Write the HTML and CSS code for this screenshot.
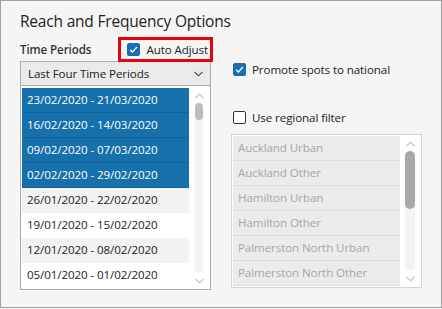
FILE: index.html
```html
<!DOCTYPE html>
<html lang="en">
<head>
    <meta charset="UTF-8">
    <title>Reach and Frequency Options</title>
    <link rel="stylesheet" href="styles.css">
</head>
<body>
    <div class="window">
        <h1 class="title">Reach and Frequency Options</h1>

        <div class="columns">
            <div class="col">
                <div class="head">
                    <span class="label">Time Periods</span>
                    <label class="auto">
                        <span class="check on"><svg viewBox="0 0 13 13"><path d="M2.5 6.8 5.2 9.4 10.6 3.6" fill="none" stroke="#fff" stroke-width="1.6"/></svg></span>
                        <span>Auto Adjust</span>
                    </label>
                </div>

                <div class="combo">
                    <span>Last Four Time Periods</span>
                    <svg class="chev" viewBox="0 0 9 6"><path d="M0.5 0.8 4.5 4.8 8.5 0.8" fill="none" stroke="#444" stroke-width="1.1"/></svg>
                </div>

                <div class="list">
                    <div class="rows">
                        <div class="row sel">23/02/2020 - 21/03/2020</div>
                        <div class="row sel">16/02/2020 - 14/03/2020</div>
                        <div class="row sel">09/02/2020 - 07/03/2020</div>
                        <div class="row sel">02/02/2020 - 29/02/2020</div>
                        <div class="row">26/01/2020 - 22/02/2020</div>
                        <div class="row">19/01/2020 - 15/02/2020</div>
                        <div class="row">12/01/2020 - 08/02/2020</div>
                        <div class="row">05/01/2020 - 01/02/2020</div>
                    </div>
                    <div class="scroll">
                        <svg class="arrow" viewBox="0 0 9 6"><path d="M0.5 5.2 4.5 1.2 8.5 5.2" fill="none" stroke="#bbb" stroke-width="1.1"/></svg>
                        <div class="track"><div class="thumb"></div></div>
                        <svg class="arrow" viewBox="0 0 9 6"><path d="M0.5 0.8 4.5 4.8 8.5 0.8" fill="none" stroke="#bbb" stroke-width="1.1"/></svg>
                    </div>
                </div>
            </div>

            <div class="col right">
                <label class="option promote">
                    <span class="check on"><svg viewBox="0 0 13 13"><path d="M2.5 6.8 5.2 9.4 10.6 3.6" fill="none" stroke="#fff" stroke-width="1.6"/></svg></span>
                    <span>Promote spots to national</span>
                </label>
                <label class="option regional">
                    <span class="check"></span>
                    <span>Use regional filter</span>
                </label>

                <div class="list regions">
                    <div class="rows">
                        <div class="row">Auckland Urban</div>
                        <div class="row">Auckland Other</div>
                        <div class="row">Hamilton Urban</div>
                        <div class="row">Hamilton Other</div>
                        <div class="row">Palmerston North Urban</div>
                        <div class="row">Palmerston North Other</div>
                    </div>
                    <div class="scroll">
                        <svg class="arrow" viewBox="0 0 9 6"><path d="M0.5 5.2 4.5 1.2 8.5 5.2" fill="none" stroke="#bbb" stroke-width="1.1"/></svg>
                        <div class="track"><div class="thumb"></div></div>
                        <svg class="arrow" viewBox="0 0 9 6"><path d="M0.5 0.8 4.5 4.8 8.5 0.8" fill="none" stroke="#bbb" stroke-width="1.1"/></svg>
                    </div>
                </div>
            </div>
        </div>
    </div>
</body>
</html>
```

FILE: styles.css
```css
body {
    margin: 0;
    background: #fff;
    font-family: "Open Sans", "Noto Sans", sans-serif;
    font-size: 11.6px;
    letter-spacing: -0.1px;
    color: #222;
}
.window {
    width: 442px;
    height: 308px;
    box-sizing: border-box;
    border: 1px solid #a0a0a0;
    background: #f5f5f5;
    padding: 0 19px;
}
.title {
    margin: 0;
    padding-top: 9px;
    font-size: 15.5px;
    font-weight: normal;
    letter-spacing: -0.2px;
    line-height: 22px;
    color: #222;
}
.columns {
    display: flex;
    gap: 20px;
    margin-top: 5px;
}
.col {
    width: 192px;
    display: flex;
    flex-direction: column;
}
.head {
    display: flex;
    align-items: center;
    justify-content: space-between;
    height: 24px;
}
.label {
    font-weight: 600;
    color: #333;
}
.auto {
    position: relative;
    display: flex;
    align-items: center;
    gap: 6px;
    height: 25px;
    padding: 0 5px 0 9px;
    margin-right: -2px;
}
.auto::after {
    content: "";
    position: absolute;
    inset: 0;
    border: 3px solid #e8000b;
}
.check {
    width: 13px;
    height: 13px;
    box-sizing: border-box;
    border: 1px solid #333;
    border-radius: 2px;
    background: #fff;
    display: flex;
}
.check.on {
    background: #1a6fb0;
    border-color: #1a6fb0;
}
.check svg {
    width: 11px;
    height: 11px;
}
.combo {
    height: 25px;
    box-sizing: border-box;
    border: 1px solid #acacac;
    background: #eaeaea;
    display: flex;
    align-items: center;
    justify-content: space-between;
    padding: 0 7px;
}
.chev {
    width: 9px;
    height: 6px;
}
.list {
    display: flex;
    border: 1px solid #acacac;
    border-top: none;
    background: #fff;
    padding: 2px 1px 1px;
}
.rows {
    width: 167px;
}
.row {
    height: 25px;
    box-sizing: border-box;
    line-height: 24px;
    padding-left: 5px;
    white-space: nowrap;
    overflow: hidden;
}
.row:nth-child(odd) {
    background: #f2f2f2;
}
.row.sel {
    background: #1670ab;
    color: #fff;
    border-bottom: 1px solid #12609a;
}
.scroll {
    flex: 1;
    display: flex;
    flex-direction: column;
    align-items: center;
}
.arrow {
    width: 9px;
    height: 6px;
    margin: 5px 0 4px;
}
.track {
    flex: 1;
    width: 8px;
    border-radius: 4px;
    background: #f3f3f3;
}
.thumb {
    height: 17px;
    border-radius: 4px;
    background: #bdbdbd;
}
.option {
    display: flex;
    align-items: center;
    gap: 6px;
    height: 20px;
    margin-left: 2px;
}
.promote {
    margin-top: 22px;
}
.regional {
    margin-top: 28px;
}
.regions {
    margin-top: 7px;
    border: 1px solid #d5d5d5;
    padding: 1px;
}
.regions .row {
    background: #ebebeb;
    color: #a8a8a8;
    border-bottom: 1px solid #dcdcdc;
}
.regions .track {
    width: 10px;
    border-radius: 5px;
}
.regions .thumb {
    height: 58px;
    border-radius: 5px;
    background: #a8a8a8;
}
```
